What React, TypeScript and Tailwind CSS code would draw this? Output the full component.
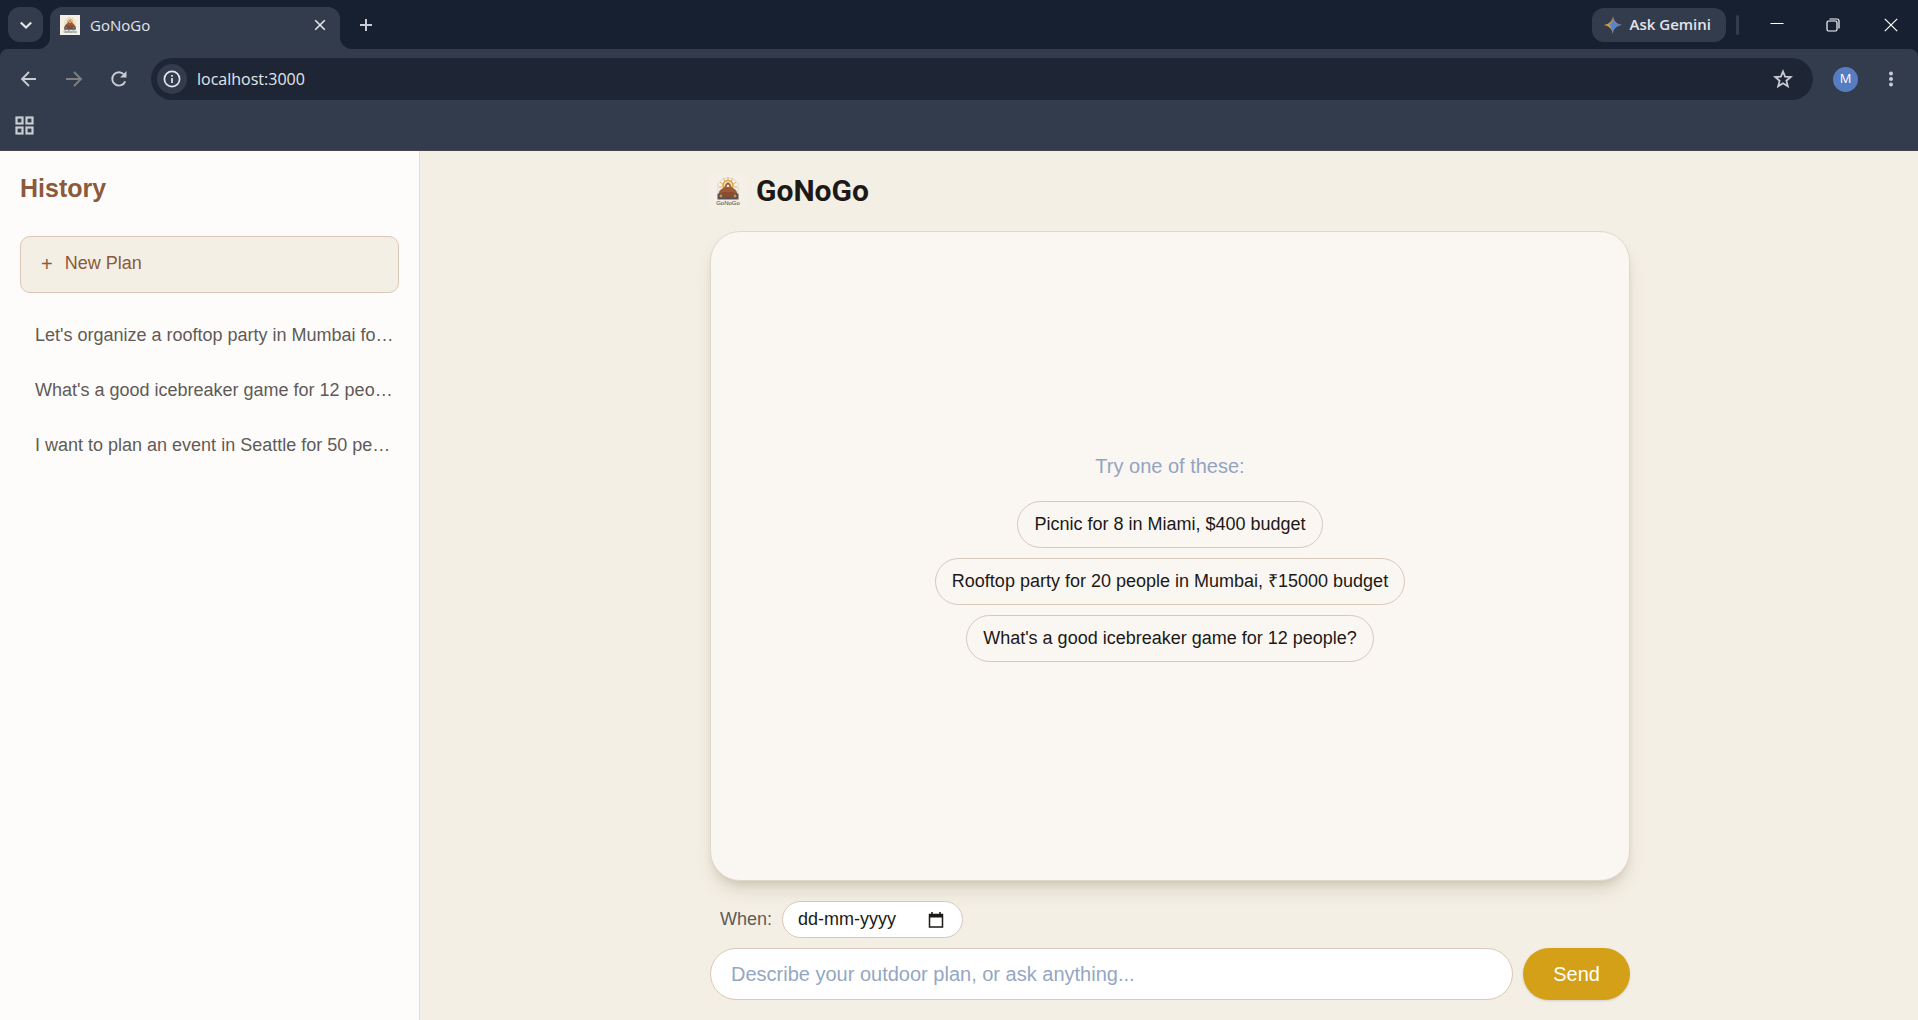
import React from "react";

const HISTORY = [
  "Let's organize a rooftop party in Mumbai fo…",
  "What's a good icebreaker game for 12 peo…",
  "I want to plan an event in Seattle for 50 pe…",
];

const SUGGESTIONS = [
  "Picnic for 8 in Miami, $400 budget",
  "Rooftop party for 20 people in Mumbai, ₹15000 budget",
  "What's a good icebreaker game for 12 people?",
];

function Logo({ className }: { className: string }) {
  return (
    <svg viewBox="0 0 36 36" className={className} role="img" aria-label="GoNoGo logo">
      <rect width="36" height="36" fill="#f5f0e7" />
      <path d="M8 25V10c2-1 3-3 5-4q5-3 10 0c2 1 3 3 5 4v15" fill="none" stroke="#d8d0c4" strokeWidth="0.8" />
      <g stroke="#e3b566" strokeWidth="1">
        <path d="M18 4v4M13.500 5.500l1.500 3M22.500 5.500l-1.500 3M10 9l3 2.500M26 9l-3 2.500M9 14h3M27 14h-3" />
      </g>
      <circle cx="18" cy="12.500" r="5" fill="#f3e3bd" stroke="#e0a23c" strokeWidth="1.400" />
      <path d="M9 20c0-3 3-4 5-5.500 1.500-2.500 2-5 4-5s2.500 2.500 4 5c2 1.500 5 2.500 5 5.500v3H9z" fill="#9c5a38" />
      <path d="M16.500 14c0-3.500 3-3.500 3 0z" fill="#f3e3bd" />
      <path d="M7.500 21c3-2.500 7 0 7.500 2.500h6c.5-2.500 4.500-5 7.500-2.500v5.500h-21z" fill="#5a5255" />
      <path d="M12 19h12l-2.500 5h-7z" fill="#8c4b2e" />
      <circle cx="11" cy="23" r="1.400" fill="#d98c45" />
      <circle cx="25" cy="23" r="1.400" fill="#d98c45" />
      <text x="18" y="31.500" textAnchor="middle" fontSize="6" fontFamily="Liberation Sans, sans-serif" fill="#3f3a38">GoNoGo</text>
    </svg>
  );
}

function TabStrip() {
  return (
    <div className="flex h-[49px] items-center bg-[#172030] pl-2 text-[#e3e5ea]">
      <button aria-label="Search tabs" className="relative z-10 flex size-[35px] items-center justify-center rounded-xl bg-[#333c4d]">
        <svg className="size-3" viewBox="0 0 12 12" fill="none" stroke="currentColor" strokeWidth="2.200">
          <path d="M.8 3.500L6 8.500l5.200-5" />
        </svg>
      </button>
      <div className="relative mt-[7px] ml-[7px] flex h-[42px] w-[290px] items-center rounded-t-xl bg-[#333c4d] pr-3.5 pb-1.5 pl-2.5">
        <span className="absolute bottom-0 -left-3 size-3 bg-[#333c4d]">
          <span className="block size-3 rounded-br-xl bg-[#172030]" />
        </span>
        <span className="absolute -right-3 bottom-0 size-3 bg-[#333c4d]">
          <span className="block size-3 rounded-bl-xl bg-[#172030]" />
        </span>
        <Logo className="size-5" />
        <span className="ml-2.5 flex-1 text-[15px] leading-5">GoNoGo</span>
        <button aria-label="Close tab">
          <svg className="size-3" viewBox="0 0 12 12" fill="none" stroke="currentColor" strokeWidth="1.600">
            <path d="M1.200 1.200l9.600 9.600M10.800 1.200l-9.600 9.600" />
          </svg>
        </button>
      </div>
      <button aria-label="New tab" className="ml-[19px]">
        <svg className="size-3.5" viewBox="0 0 14 14" fill="none" stroke="#c9ccd3" strokeWidth="2">
          <path d="M7 1v12M1 7h12" />
        </svg>
      </button>
      <button className="ml-auto flex h-[34px] items-center gap-2 rounded-xl bg-[#333c4d] pr-[15px] pl-3 text-[15px] font-semibold">
        <svg className="size-[18px]" viewBox="0 0 18 18" aria-hidden="true">
          <path d="M9 0c.8 5 3.500 8.200 9 9H9z" fill="#c8865c" />
          <path d="M9 0C8.200 5 5 8.200 0 9h9z" fill="#b87a55" />
          <path d="M0 9c5 .8 8.200 4 9 9V4C7 7 4 8.500 0 9z" fill="#d6a32c" />
          <path d="M9 3c-1 3-2.500 5-4.500 6 2.500 1 4 5 4.500 9z" fill="#8c98a0" />
          <path d="M9.500 2.500C11 6.500 13 8.400 18 9c-5 .8-8 3.500-9 7.500C8 13 7 11 5.500 9c2-1.500 3.200-3.500 4-6.500z" fill="#5b83c8" />
        </svg>
        Ask Gemini
      </button>
      <span className="ml-2.5 h-5 w-[3px] rounded bg-[#333c4d]" />
      <div className="flex items-center text-white">
        <button aria-label="Minimize" className="flex w-[76px] justify-center">
          <svg className="size-3.5" viewBox="0 0 14 14" stroke="currentColor"><path d="M.5 5.500h13" /></svg>
        </button>
        <button aria-label="Restore" className="flex w-9 justify-center">
          <svg className="size-3.5" viewBox="0 0 14 14" fill="none" stroke="currentColor" strokeWidth="1.200">
            <rect x="1" y="3" width="10" height="10" rx="1.500" />
            <path d="M3.500 1H11a2 2 0 0 1 2 2v7.500" />
          </svg>
        </button>
        <button aria-label="Close" className="flex w-[67px] justify-center pl-[13px]">
          <svg className="size-3.5" viewBox="0 0 14 14" fill="none" stroke="currentColor" strokeWidth="1.200">
            <path d="M.8.8l12.400 12.400M13.200.8L.8 13.200" />
          </svg>
        </button>
      </div>
    </div>
  );
}

function Toolbar() {
  return (
    <div className="bg-[#172030]">
      <div className="rounded-t-lg border-b border-[#48444f] bg-[#333c4d] text-[#c9ccd3]">
        <div className="flex h-[60px] items-center pr-[18px] pl-5">
          <button aria-label="Back">
            <svg className="size-[18px]" viewBox="0 0 18 18" fill="none" stroke="currentColor" strokeWidth="1.800">
              <path d="M16 9H2.500M9 2L2 9l7 7" />
            </svg>
          </button>
          <button aria-label="Forward" className="ml-[27px] text-[#807f84]">
            <svg className="size-[18px]" viewBox="0 0 18 18" fill="none" stroke="currentColor" strokeWidth="1.800">
              <path d="M1 9h14.500M9 2l7 7-7 7" />
            </svg>
          </button>
          <button aria-label="Reload" className="ml-[27px]">
            <svg className="size-[18px]" viewBox="0 0 18 18" fill="none" stroke="currentColor" strokeWidth="1.900">
              <path d="M15.200 11.300A6.700 6.700 0 1 1 14 4.500" />
              <path d="M16.500 1v6.500H10z" fill="currentColor" stroke="none" />
            </svg>
          </button>
          <div className="ml-[23px] flex h-[42px] flex-1 items-center rounded-full bg-[#1e2636] pr-5 pl-1.5">
            <button aria-label="Site information" className="flex size-[30px] items-center justify-center rounded-full bg-[#333c4d] text-[#e3e5ea]">
              <svg className="size-[18px]" viewBox="0 0 18 18" fill="none" stroke="currentColor" strokeWidth="1.700">
                <circle cx="9" cy="9" r="7.600" />
                <path d="M9 8v5M9 5v1.700" />
              </svg>
            </button>
            <input aria-label="Address" defaultValue="localhost:3000" className="ml-2.5 min-w-0 flex-1 bg-transparent text-[16px] text-[#e3e5ea] outline-none" />
            <button aria-label="Bookmark this tab">
              <svg className="size-5" viewBox="0 0 20 20" fill="none" stroke="currentColor" strokeWidth="1.800">
                <path d="M10 2.500l2.100 5.200 5.600.4-4.300 3.600 1.400 5.500-4.800-3-4.800 3 1.400-5.500-4.300-3.600 5.600-.4z" />
              </svg>
            </button>
          </div>
          <button aria-label="Profile" className="ml-5 flex size-[25px] items-center justify-center rounded-full bg-[#567dc2] text-[13px] text-white">M</button>
          <button aria-label="Menu" className="ml-6">
            <svg className="size-[18px]" viewBox="0 0 18 18" fill="currentColor">
              <circle cx="9" cy="3.500" r="2" /><circle cx="9" cy="9" r="2" /><circle cx="9" cy="14.500" r="2" />
            </svg>
          </button>
        </div>
        <div className="flex h-[41px] items-center pb-2 pl-[15px]">
          <button aria-label="Apps">
            <svg className="size-[19px]" viewBox="0 0 19 19" fill="none" stroke="currentColor" strokeWidth="2.200">
              <rect x="1.500" y="1.500" width="6" height="6" /><rect x="11.500" y="1.500" width="6" height="6" />
              <rect x="1.500" y="11.500" width="6" height="6" /><rect x="11.500" y="11.500" width="6" height="6" />
            </svg>
          </button>
        </div>
      </div>
    </div>
  );
}

function Sidebar() {
  return (
    <aside className="w-[420px] shrink-0 border-r border-[#e2dbd0] bg-[#fefcfb] p-5">
      <h2 className="text-[25px] font-bold leading-[35px] text-[#8b5a3c]">History</h2>
      <button className="mt-[30px] flex h-[57px] w-full items-center gap-3 rounded-[10px] border border-[#d9c8b8] bg-[#f4efe4] px-5 pb-0.5 text-[18px] text-[#8b5a3c]">
        <span className="text-[20px]">+</span>
        <span>New Plan</span>
      </button>
      <ul className="mt-5 flex flex-col gap-2.5">
        {HISTORY.map((item) => (
          <li key={item}>
            <button className="block h-[45px] w-full pr-1 pl-[15px] text-left text-[18px] whitespace-nowrap text-[#5f5b57]">{item}</button>
          </li>
        ))}
      </ul>
    </aside>
  );
}

export default function App() {
  return (
    <div className="flex min-h-screen flex-col">
      <header className="font-['Open_Sans',sans-serif]">
        <TabStrip />
        <Toolbar />
      </header>
      <div className="flex flex-1 bg-[#f4efe4] font-['Liberation_Sans',Arial,sans-serif]">
        <Sidebar />
        <main className="flex flex-1 justify-center pl-0.5">
          <div className="flex w-full max-w-[960px] flex-col p-5">
            <div className="flex h-10 items-center gap-2.5">
              <Logo className="size-9" />
              <h1 className="font-['Roboto',sans-serif] text-[30px] font-bold leading-10 text-[#1c1917]">GoNoGo</h1>
            </div>
            <section className="mt-5 flex flex-1 flex-col items-center justify-center rounded-[30px] border border-[#dfd9cc] bg-[#faf7f2] shadow-[0_12px_18px_-4px_rgba(90,70,40,0.16),0_5px_8px_-4px_rgba(90,70,40,0.16)]">
              <p className="mb-5 text-[20px] leading-[30px] text-[#94a3c0]">Try one of these:</p>
              <div className="flex flex-col items-center gap-2.5">
                {SUGGESTIONS.map((text) => (
                  <button key={text} className="h-[47px] rounded-full border border-[#d9c8b8] px-4 text-[18px] text-[#1c1917]">{text}</button>
                ))}
              </div>
            </section>
            <form onSubmit={(e) => e.preventDefault()}>
              <div className="mt-5 flex items-center gap-2.5 pl-2.5">
                <label htmlFor="when" className="text-[18px] text-[#5f5b57]">When:</label>
                <div className="flex h-[37px] w-[181px] items-center rounded-full border border-[#d9c8b8] bg-white pr-[18px] pl-[15px]">
                  <input id="when" placeholder="dd-mm-yyyy" className="min-w-0 flex-1 bg-transparent text-[18px] text-[#1c1917] outline-none placeholder:text-[#1c1917]" />
                  <button type="button" aria-label="Open calendar">
                    <svg className="size-4" viewBox="0 0 16 16" fill="none" stroke="#1c1917" strokeWidth="1.500">
                      <path d="M1.500 2.500h13v12.500h-13z" />
                      <path d="M1 2h14v3.500H1z" fill="#1c1917" stroke="none" />
                      <path d="M4 0v3M12 0v3" />
                    </svg>
                  </button>
                </div>
              </div>
              <div className="mt-2.5 flex gap-2.5">
                <input aria-label="Message" placeholder="Describe your outdoor plan, or ask anything..." className="h-[52px] min-w-0 flex-1 rounded-full border border-[#d9c8b8] bg-white px-5 text-[20px] outline-none placeholder:text-[#94a7c2]" />
                <button className="h-[52px] rounded-full bg-[#d4a017] px-[30px] text-[20px] text-white shadow-sm">Send</button>
              </div>
            </form>
          </div>
        </main>
      </div>
    </div>
  );
}
